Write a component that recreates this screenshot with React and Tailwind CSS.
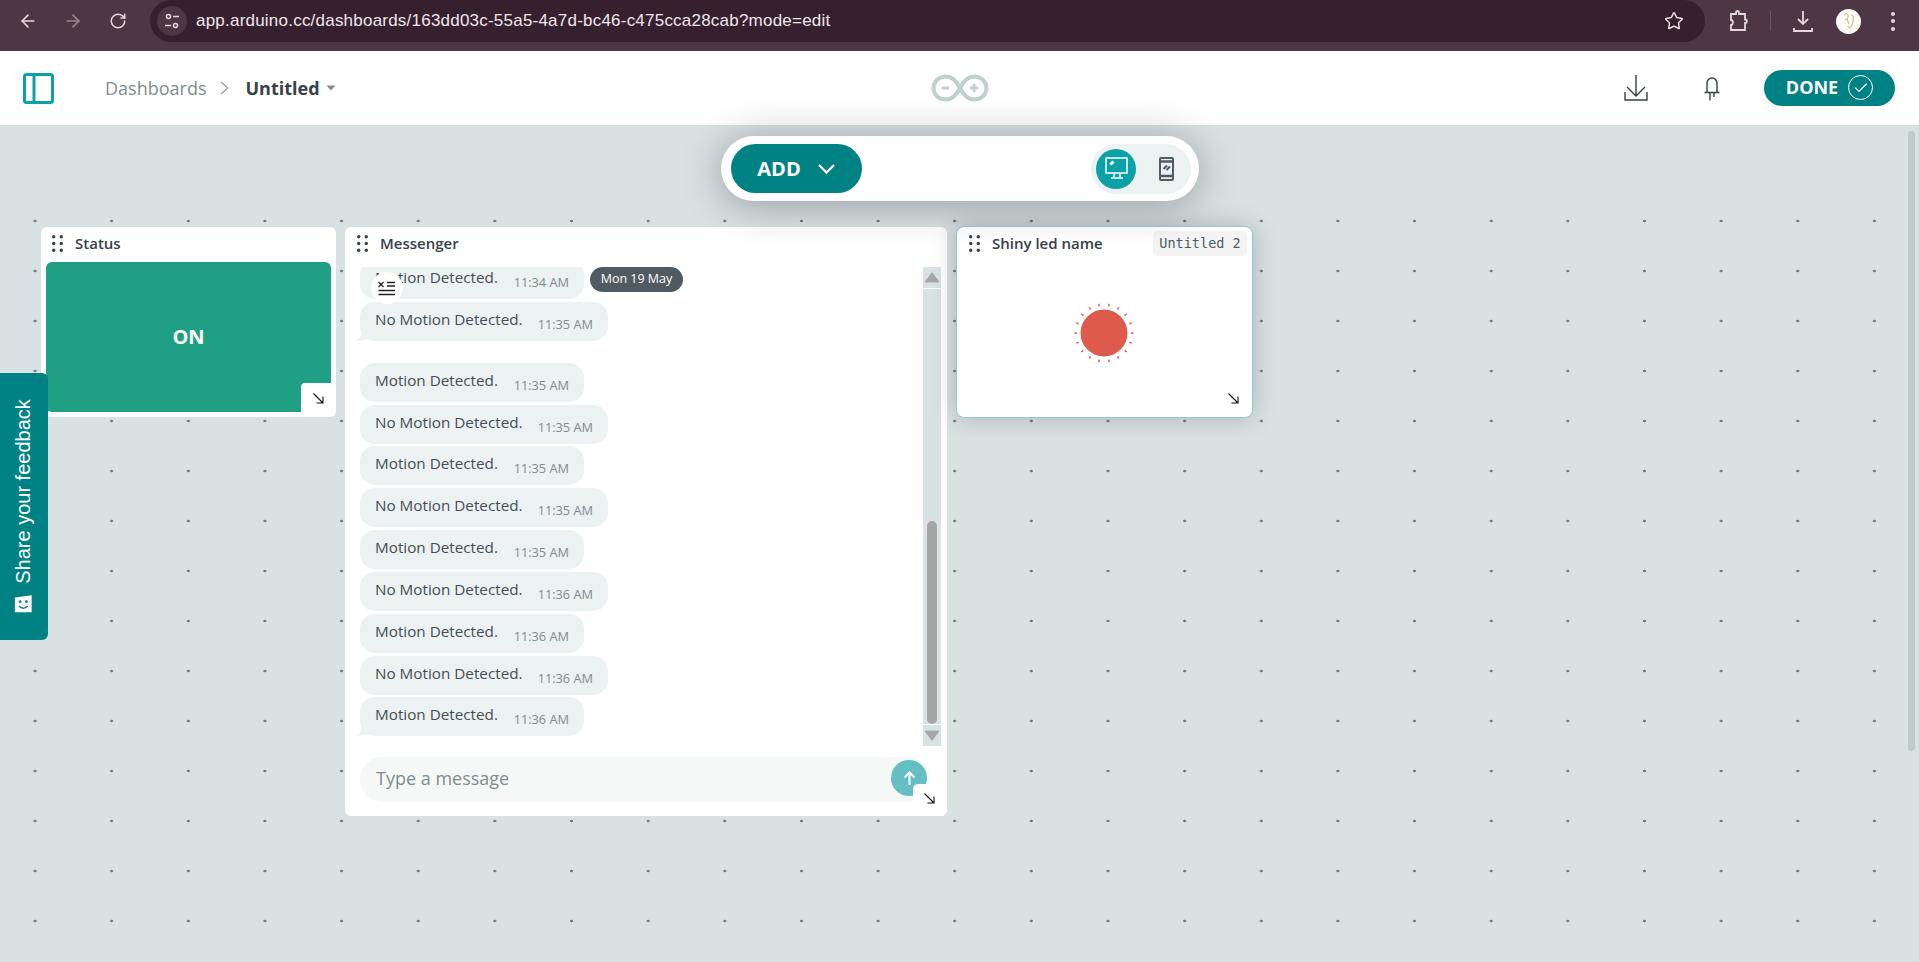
import React from "react";
import { ArrowLeft, ArrowRight, RotateCw, Star, Check } from "lucide-react";

const Dots = () => (
  <svg width="11" height="17" viewBox="0 0 11 17" className="shrink-0" fill="#374146">
    {[1.7, 8.5, 15.3].map((y) => (
      <g key={y}>
        <circle cx="1.7" cy={y} r="1.7" />
        <circle cx="9.3" cy={y} r="1.7" />
      </g>
    ))}
  </svg>
);

const Resize = ({ className }) => (
  <svg width="11" height="11" viewBox="0 0 11 11" className={className} fill="none" stroke="#111" strokeWidth="1.1">
    <path d="M0.5 0.5L10 10M10 3.5V10H3.5" />
  </svg>
);

const Bubble = ({ no, time, tail, className = "" }) => (
  <div className={`relative flex h-[39px] shrink-0 items-start rounded-[15px] bg-[#ecf1f1] pl-[15px] pr-[15px] ${no ? "w-[248px]" : "w-[224px]"} ${className}`}>
    <span className="mt-[7px] whitespace-nowrap text-[15.25px] leading-[20px] text-[#434f54]">{no ? "No Motion Detected." : "Motion Detected."}</span>
    <span className="ml-auto mt-[14px] whitespace-nowrap text-[12.75px] leading-[17px] text-[#7f8c8d]">{time}</span>
    {tail && (
      <svg width="12" height="12" viewBox="0 0 12 12" className="absolute -left-[5px] bottom-0" fill="#ecf1f1">
        <path d="M6 0V5C6 8 4 10 0 11.5C4 12 8 11.5 12 10V0Z" />
      </svg>
    )}
  </div>
);

const Triangle = ({ down }) => (
  <svg width="14" height="11" viewBox="0 0 14 11" className={down ? "rotate-180" : ""} fill="#a6a6a6" stroke="#a6a6a6" strokeWidth="2" strokeLinejoin="round">
    <path d="M7 1.5L13 9.5H1Z" />
  </svg>
);

const ticks = Array.from({ length: 18 }, (_, i) => i * 20 + 10);

export default function App() {
  return (
    <div className="flex h-[962px] w-full flex-col overflow-hidden bg-[#d9e2e3] font-['Open_Sans',sans-serif]">
      {/* Browser bar */}
      <div className="flex h-[51px] shrink-0 items-start bg-[#4d3744] font-['Liberation_Sans',sans-serif] text-[#e4d7de]">
        <div className="flex h-[42px] w-[150px] shrink-0 items-center pl-[18px]">
          <ArrowLeft size={20} strokeWidth={2} />
          <ArrowRight size={20} strokeWidth={2} className="ml-[25px] opacity-50" />
          <RotateCw size={18} strokeWidth={2} className="ml-[26px]" />
        </div>
        <div className="flex h-[42px] w-[1555px] shrink-0 items-center rounded-r-[21px] rounded-l-[21px] bg-[#35212d] pl-[7px] pr-[21px]">
          <div className="flex h-[30px] w-[30px] items-center justify-center rounded-full bg-[#4d3744]">
            <svg width="16" height="16" viewBox="0 0 16 16" fill="none" stroke="#e4d7de" strokeWidth="1.5">
              <circle cx="4.5" cy="3.5" r="2" />
              <path d="M9 3.5H15M1 12.5H7" />
              <circle cx="11.5" cy="12.5" r="2" />
            </svg>
          </div>
          <span className="ml-[9px] text-[17px] tracking-[0.22px] text-[#efe6eb]">app.arduino.cc/dashboards/163dd03c-55a5-4a7d-bc46-c475cca28cab?mode=edit</span>
          <Star size={20} strokeWidth={1.8} className="ml-auto" />
        </div>
        <div className="flex h-[42px] flex-1 items-center pl-[24px]">
          <svg width="20" height="22" viewBox="0 0 20 22" fill="none" stroke="#e4d7de" strokeWidth="1.8">
            <path d="M2 4H7V2.5a1.5 1.5 0 0 1 3 0V4H16V9.5C18.5 9.5 18.5 13 16 13V20H2V15C4.5 15 4.5 10 2 10Z" />
          </svg>
          <div className="ml-[21px] h-[20px] w-px bg-[#6c5763]" />
          <svg width="22" height="24" viewBox="0 0 22 24" className="ml-[21px]" fill="none" stroke="#e4d7de" strokeWidth="1.8">
            <path d="M11 2V15M6 10L11 15L16 10" />
            <path d="M2 19V22H20V19" />
          </svg>
          <div className="ml-[22px] flex h-[25px] w-[25px] shrink-0 items-center justify-center rounded-full bg-[#fdfbf5]">
            <svg width="14" height="18" viewBox="0 0 14 18" fill="none" stroke="#c2a56c" strokeWidth="0.9">
              <path d="M2 3C5 0 8 3 5 7L3 8M5 7L7 12M9 3C13 2 11 10 10 13C9 17 6 16 6 14" />
            </svg>
          </div>
          <div className="ml-[30px] flex flex-col gap-[3.5px]">
            <div className="h-[4px] w-[4px] rounded-full bg-[#e4d7de]" />
            <div className="h-[4px] w-[4px] rounded-full bg-[#e4d7de]" />
            <div className="h-[4px] w-[4px] rounded-full bg-[#e4d7de]" />
          </div>
        </div>
      </div>

      {/* App header */}
      <header className="flex h-[74px] shrink-0 items-center bg-white pl-[23px] pr-[24px]">
        <svg width="31" height="31" viewBox="0 0 31 31" fill="none" stroke="#0ca1a6" strokeWidth="3">
          <rect x="1.5" y="1.5" width="28" height="28" rx="2" />
          <path d="M11 1.5V29.5" />
        </svg>
        <span className="ml-[51px] text-[18px] text-[#7f8c8d]">Dashboards</span>
        <svg width="9" height="14" viewBox="0 0 9 14" className="ml-[14px]" fill="none" stroke="#95a5a6" strokeWidth="1.4">
          <path d="M1 1L7.5 7L1 13" />
        </svg>
        <span className="ml-[16px] text-[18px] font-bold text-[#374146]">Untitled</span>
        <svg width="10" height="6" viewBox="0 0 10 6" className="ml-[6px]" fill="#7f8c8d">
          <path d="M0.5 0.5H9.5L5 5.5Z" />
        </svg>
        <div className="flex flex-1 justify-center pr-[40px]">
          <svg width="58" height="28" viewBox="0 0 58 28" fill="none" stroke="#c3cfcf" strokeWidth="4">
            <path d="M29 14C25 6 21 2.5 15 2.5C8 2.5 2.5 7.5 2.5 14C2.5 20.500 8 25.500 15 25.500C21 25.500 25 22 29 14C33 6 37 2.500 43 2.500C50 2.500 55.500 7.500 55.500 14C55.500 20.500 50 25.500 43 25.500C37 25.500 33 22 29 14Z" />
            <path d="M11 14H18" strokeWidth="3" />
            <path d="M39 14H47M43 10V18" strokeWidth="3" />
          </svg>
        </div>
        <svg width="24" height="26" viewBox="0 0 24 26" fill="none" stroke="#374146" strokeWidth="1.4">
          <path d="M12 0V20M3 12L12 21L21 12" />
          <path d="M1 17V25H23V17" />
        </svg>
        <svg width="18" height="25" viewBox="0 0 18 25" className="ml-[55px] mr-[43px]" fill="none" stroke="#374146" strokeWidth="1.4">
          <path d="M4 16V7a5 5 0 0 1 10 0V16M1.500 16.500H16.500M7 17V24.500M11 17V21" />
        </svg>
        <button className="flex h-[36px] w-[131px] items-center justify-center rounded-full bg-[#008184] pb-[1px] text-[18px] font-bold text-white">
          DONE
          <span className="ml-[10px] flex h-[25px] w-[25px] items-center justify-center rounded-full border-[1.5px] border-white">
            <Check size={16} strokeWidth={1.8} />
          </span>
        </button>
      </header>

      {/* Canvas */}
      <main className="relative flex-1 bg-[#d9e2e3]">
        <div className="absolute inset-x-0 bottom-0 top-[71px] bg-[radial-gradient(circle,#6a7677_1px,transparent_1.7px)] bg-[size:76.65px_50px] bg-[position:-3.3px_0px]" />

        {/* Status */}
        <section className="absolute left-[41px] top-[102px] flex h-[190px] w-[295px] flex-col rounded-[6px] bg-white px-[5px] pb-[5px]">
          <div className="flex h-[35px] shrink-0 items-center gap-[12px] pb-[2px] pl-[6px]">
            <Dots />
            <span className="text-[15px] font-semibold text-[#374146]">Status</span>
          </div>
          <div className="relative flex flex-1 items-center justify-center rounded-[6px] bg-[#1fa085] text-[20px] font-bold text-white">
            ON
            <div className="absolute bottom-0 right-0 flex h-[29px] w-[30px] items-center justify-center rounded-tl-[4px] bg-white pl-[5px] pt-[2px]">
              <Resize />
            </div>
          </div>
        </section>

        {/* Messenger */}
        <section className="absolute left-[345px] top-[102px] flex h-[589px] w-[602px] flex-col rounded-[6px] bg-white">
          <div className="flex h-[35px] shrink-0 items-center gap-[12px] pb-[2px] pl-[12px]">
            <Dots />
            <span className="text-[15px] font-semibold text-[#374146]">Messenger</span>
          </div>
          <div className="mt-[5px] flex h-[479px] shrink-0">
            <div className="relative flex-1 overflow-hidden pl-[15px]">
              <div className="-mt-[7px] flex flex-col gap-[2.85px]">
                <Bubble time="11:34 AM" />
                <Bubble no time="11:35 AM" tail />
                <Bubble time="11:35 AM" className="mt-[19px]" />
                <Bubble no time="11:35 AM" />
                <Bubble time="11:35 AM" />
                <Bubble no time="11:35 AM" />
                <Bubble time="11:35 AM" />
                <Bubble no time="11:36 AM" />
                <Bubble time="11:36 AM" />
                <Bubble no time="11:36 AM" />
                <Bubble time="11:36 AM" tail />
              </div>
              <div className="absolute left-[245px] top-0 flex h-[25px] w-[93px] items-center justify-center rounded-full bg-[#4f5b61] pb-[1px] text-[12.5px] font-medium text-white">Mon 19 May</div>
              <div className="absolute left-[26px] top-[5px] flex h-[32px] w-[32px] items-center justify-center rounded-full bg-white">
                <svg width="18" height="15" viewBox="0 0 18 15" fill="none" stroke="#222" strokeWidth="1.300">
                  <path d="M0.500 1L5.500 6M5.500 1L0.500 6M9 1.500H17M9 5H17M0.500 9.500H17M0.500 13.500H17" />
                </svg>
              </div>
            </div>
            <div className="mr-[6px] flex w-[18px] shrink-0 flex-col bg-[#d9e2e3]">
              <div className="flex h-[22px] items-center justify-center border-b border-white"><Triangle /></div>
              <div className="flex flex-1 flex-col justify-end px-[4px]">
                <div className="h-[203px] rounded-[5px] bg-[#a6a6a6]" />
              </div>
              <div className="flex h-[22px] items-center justify-center border-t border-white"><Triangle down /></div>
            </div>
          </div>
          <div className="relative ml-[15px] mr-[17px] mt-[11px] flex h-[45px] shrink-0 items-center rounded-[22px] bg-[#f6f8f8] pb-[2px] pl-[16px]">
            <span className="text-[18px] text-[#7f8c8d]">Type a message</span>
            <div className="absolute right-[3px] top-[3px] flex h-[36px] w-[36px] items-center justify-center rounded-full bg-[#63bfc2]">
              <svg width="13" height="14" viewBox="0 0 13 14" fill="none" stroke="#fff" strokeWidth="2">
                <path d="M6.500 14V2M1.500 6.500L6.500 1.500L11.500 6.500" />
              </svg>
            </div>
          </div>
          <div className="absolute bottom-0 right-0 flex h-[32px] w-[34px] items-center justify-center rounded-tl-[5px] rounded-br-[6px] bg-white pb-[4px] pr-[2px]">
            <Resize />
          </div>
        </section>

        {/* LED */}
        <section className="absolute left-[956px] top-[101px] flex h-[192px] w-[297px] flex-col rounded-[8px] border border-[#8fcdd0] bg-white shadow-[0_0_24px_rgba(0,0,0,0.22)]">
          <div className="flex h-[35px] shrink-0 items-center pb-[2px] pl-[12px] pr-[5px]">
            <Dots />
            <span className="ml-[12px] text-[15px] font-semibold text-[#374146]">Shiny led name</span>
            <span className="ml-auto flex h-[25px] w-[94px] items-center justify-center rounded-[5px] bg-[#f4f4f4] font-['DejaVu_Sans_Mono',monospace] text-[13.5px] text-[#4f5b61]">Untitled 2</span>
          </div>
          <div className="relative flex flex-1 items-center justify-center pb-[14px] pr-[2px]">
            <svg width="62" height="62" viewBox="0 0 62 62">
              <circle cx="31" cy="31" r="23.500" fill="#dd5b4b" />
              {ticks.map((a) => (
                <rect key={a} x="30.250" y="1.500" width="1.500" height="2.500" fill="#dd5b4b" transform={`rotate(${a} 31 31)`} />
              ))}
            </svg>
            <Resize className="absolute bottom-[13px] right-[13px]" />
          </div>
        </section>

        {/* Toolbar */}
        <div className="absolute left-[721px] top-[11px] flex h-[65px] w-[478px] items-center justify-between rounded-full bg-white pl-[10px] pr-[8px] shadow-[0_4px_40px_rgba(0,0,0,0.32)]">
          <button className="flex h-[49px] w-[131px] items-center justify-center gap-[17px] rounded-full bg-[#008184] pr-[1px] text-[20px] font-bold text-white">
            ADD
            <svg width="17" height="10" viewBox="0 0 17 10" fill="none" stroke="#fff" strokeWidth="2.200">
              <path d="M1 1L8.500 8.500L16 1" />
            </svg>
          </button>
          <div className="flex h-[50px] w-[100px] items-center rounded-full bg-[#ecf1f1] pl-[5px]">
            <div className="flex h-[40px] w-[40px] items-center justify-center rounded-full bg-[#0ca1a6] pl-[1px]">
              <svg width="24" height="23" viewBox="0 0 24 23" fill="none" stroke="#fff" strokeWidth="1.500">
                <rect x="1" y="1" width="21" height="15" />
                <path d="M9 16.500V20M15 16.500V20M6 21H18M5 7L8 4M9 5L6 8" />
              </svg>
            </div>
            <svg width="15" height="24" viewBox="0 0 15 24" className="ml-[23px]" fill="none" stroke="#4f5b61" strokeWidth="2">
              <rect x="1" y="1" width="13" height="22" rx="1" />
              <path d="M1 4.500H14M1 19H14" strokeWidth="2.500" />
              <path d="M4.500 12L8 8.500M7.500 13L11 9.500" />
            </svg>
          </div>
        </div>

        {/* Page scrollbar */}
        <div className="absolute right-[4px] top-[6px] h-[620px] w-[7px] rounded-full bg-[#bfcaca]" />
      </main>

      {/* Feedback tab */}
      <div className="absolute left-0 top-[373px] flex h-[267px] w-[48px] items-center justify-center rounded-r-[6px] bg-[#008184] pr-[2px] text-white">
        <div className="flex -rotate-90 items-center gap-[11px] whitespace-nowrap font-['Liberation_Sans',sans-serif] text-[20px]">
          <svg width="20" height="21" viewBox="0 0 18 20" className="rotate-90">
            <path d="M1 3L17 1V17H1Z" fill="#fff" />
            <circle cx="6" cy="7" r="1.300" fill="#008184" />
            <circle cx="12" cy="7" r="1.300" fill="#008184" />
            <path d="M5 11C7 14 11 14 13 11" fill="none" stroke="#008184" strokeWidth="1.500" />
          </svg>
          Share your feedback
        </div>
      </div>
    </div>
  );
}
